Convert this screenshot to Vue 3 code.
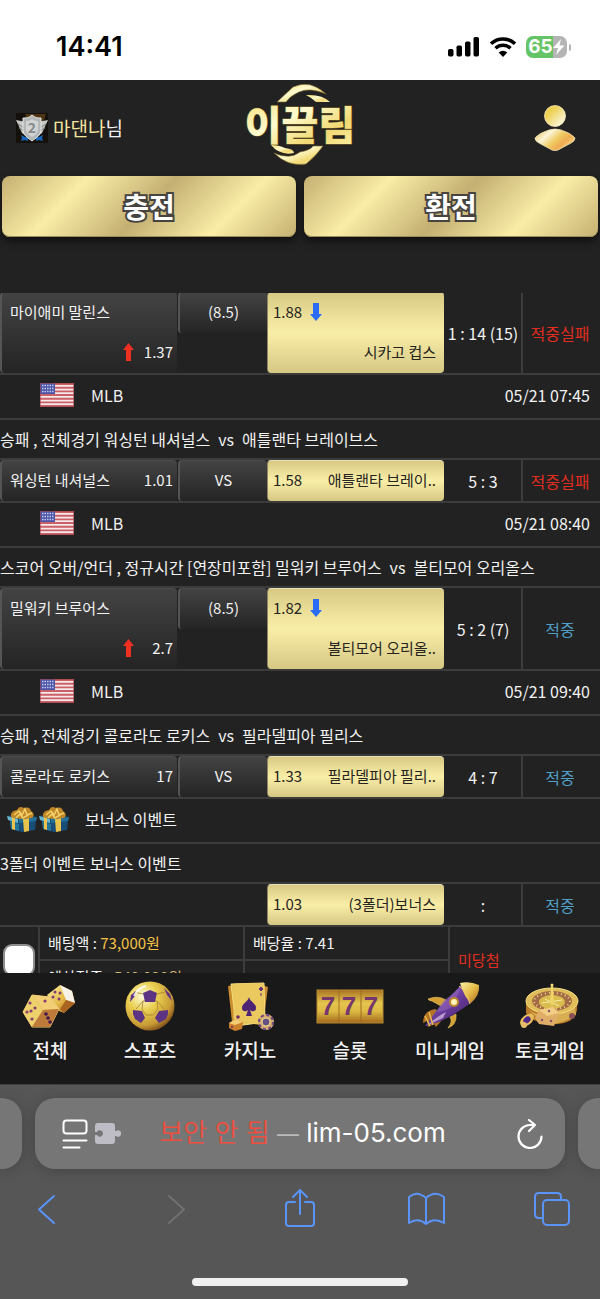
<script setup>
import { ref } from "vue";

const selected = ref(false);

const bets = [
  {
    home: "마이애미 말린스", homeOdds: "1.37", line: "(8.5)",
    away: "시카고 컵스", awayOdds: "1.88",
    tall: true, score: "1 : 14 (15)", result: "적중실패", won: false,
  },
  {
    league: "MLB", date: "05/21 07:45",
    market: "승패 , 전체경기 워싱턴 내셔널스", opponent: "애틀랜타 브레이브스",
    home: "워싱턴 내셔널스", homeOdds: "1.01", line: "VS",
    away: "애틀랜타 브레이..", awayOdds: "1.58",
    score: "5 : 3", result: "적중실패", won: false,
  },
  {
    league: "MLB", date: "05/21 08:40",
    market: "스코어 오버/언더 , 정규시간 [연장미포함] 밀워키 브루어스", opponent: "볼티모어 오리올스",
    home: "밀워키 브루어스", homeOdds: "2.7", line: "(8.5)",
    away: "볼티모어 오리올..", awayOdds: "1.82",
    tall: true, score: "5 : 2 (7)", result: "적중", won: true,
  },
  {
    league: "MLB", date: "05/21 09:40",
    market: "승패 , 전체경기 콜로라도 로키스", opponent: "필라델피아 필리스",
    home: "콜로라도 로키스", homeOdds: "17", line: "VS",
    away: "필라델피아 필리..", awayOdds: "1.33",
    score: "4 : 7", result: "적중", won: true,
  },
  {
    league: "보너스 이벤트", bonus: true,
    market: "3폴더 이벤트 보너스 이벤트",
    away: "(3폴더)보너스", awayOdds: "1.03",
    score: ":", result: "적중", won: true,
  },
];
</script>

<template>
  <div class="phone">
    <div class="status">
      <span class="time">14:41</span>
      <div class="indicators">
        <svg width="32" height="20" viewBox="0 0 32 20">
          <rect x="0" y="12" width="5.500" height="7.500" rx="1.700" />
          <rect x="8.500" y="8.500" width="5.500" height="11" rx="1.700" />
          <rect x="17" y="4.500" width="5.500" height="15" rx="1.700" />
          <rect x="25.500" y="0" width="5.500" height="19.500" rx="1.700" />
        </svg>
        <svg width="28" height="20" viewBox="0 0 28 20">
          <path d="M2 6.700a17.500 17.500 0 0 1 24 0" fill="none" stroke="#000" stroke-width="3.600" />
          <path d="M6.500 11.300a11 11 0 0 1 15 0" fill="none" stroke="#000" stroke-width="3.500" />
          <path d="M14 20l-4.300-4.500a6.500 6.500 0 0 1 8.600 0z" />
        </svg>
        <div class="battery">
          <span>65</span>
          <svg width="12" height="16" viewBox="0 0 12 16"><path d="M8 0L0 9h5l-2 7 8.500-9.500h-5z" fill="#fff" /></svg>
        </div>
      </div>
    </div>

    <header class="top">
      <div class="user">
        <svg width="32" height="30" viewBox="0 0 32 30">
          <rect width="32" height="30" fill="#14110d" />
          <path d="M9 1h21l-3 9-16-3z" fill="#4c3414" />
          <path d="M5 22l4 2 3-1v5l-3-1-4 1 1-3zM27 22l-4 2-3-1v5l3-1 4 1-1-3z" fill="#1765b8" />
          <path d="M0 7l10 2v14l-4-3zM32 7l-10 2v14l4-3z" fill="#c7c9c7" />
          <path d="M2 11l6 4M3 15l6 3M30 11l-6 4M29 15l-6 3" stroke="#777b79" fill="none" />
          <path d="M16 2c3 3 6 3 9 3v12c0 5-5 8-9 11-4-3-9-6-9-11V5c3 0 6 0 9-3z" fill="#b4b7b7" stroke="#e4e6e4" />
          <path d="M16 6c2 2 4 2 6 2v8c0 4-3 6-6 8-3-2-6-4-6-8V8c2 0 4 0 6-2z" fill="#d2d4d4" />
          <text x="16" y="20" text-anchor="middle" font-size="14" font-weight="700" fill="#85898a">2</text>
        </svg>
        <p><span class="name">마댄나</span>님</p>
      </div>
      <a href="#" class="logo">
        <svg width="120" height="90" viewBox="0 0 120 90">
          <defs>
            <linearGradient id="shine" x1="0" y1="0" x2="1" y2="1">
              <stop offset="0" stop-color="#f3d96c" />
              <stop offset=".4" stop-color="#fffbd0" />
              <stop offset=".7" stop-color="#f0d873" />
              <stop offset="1" stop-color="#fff4ae" />
            </linearGradient>
            <linearGradient id="gold" x1="0" y1="0" x2="1" y2="1">
              <stop offset="0" stop-color="#fff0a6" />
              <stop offset=".5" stop-color="#e6bd4a" />
              <stop offset="1" stop-color="#ae6a1d" />
            </linearGradient>
            <radialGradient id="ball" cx=".35" cy=".3" r=".75">
              <stop offset="0" stop-color="#fffce0" />
              <stop offset=".4" stop-color="#e9cf50" />
              <stop offset=".8" stop-color="#c79a35" />
              <stop offset="1" stop-color="#7d4c18" />
            </radialGradient>
            <linearGradient id="purple" x1="0" y1="0" x2="1" y2="1">
              <stop offset="0" stop-color="#a273ce" />
              <stop offset=".5" stop-color="#673b99" />
              <stop offset="1" stop-color="#351654" />
            </linearGradient>
            <linearGradient id="slot" x1="0" y1="0" x2="0" y2="1">
              <stop offset="0" stop-color="#a97422" />
              <stop offset=".4" stop-color="#e5c64f" />
              <stop offset=".65" stop-color="#dcb943" />
              <stop offset="1" stop-color="#a2671d" />
            </linearGradient>
          </defs>
          <path d="M37 22L53 7Q70-1 86 14Q70 7 59 12Q50 16 46 22z" fill="url(#shine)" stroke="#79612b" stroke-width=".6" />
          <path d="M66 15Q82 14 90 22H76Q72 18 66 15z" fill="url(#shine)" />
          <path d="M31 65Q39 65 45 68Q54 69 54 73Q40 76 31 65z" fill="url(#shine)" />
          <path d="M34 73Q50 80 60 72Q71 70 73 66H83Q76 76 66 84Q48 87 34 73z" fill="url(#shine)" stroke="#79612b" stroke-width=".6" />
          <text x="60" y="60" text-anchor="middle" class="wordmark">이끌림</text>
        </svg>
      </a>
      <button class="account" aria-label="내 정보">
        <svg width="42" height="46" viewBox="0 0 42 46">
          <defs>
            <linearGradient id="head" x1="0" y1="0" x2="1" y2="1">
              <stop offset=".3" stop-color="#edd152" />
              <stop offset="1" stop-color="#fff" />
            </linearGradient>
            <linearGradient id="bust" x1="0" y1="0" x2="1" y2=".6">
              <stop offset="0" stop-color="#e9b542" />
              <stop offset=".35" stop-color="#fdf5d9" />
              <stop offset=".6" stop-color="#efcb62" />
              <stop offset=".8" stop-color="#efab51" />
              <stop offset="1" stop-color="#f7d584" />
            </linearGradient>
          </defs>
          <circle cx="21" cy="11" r="10.500" fill="url(#head)" stroke="#f7e9bd" stroke-width=".8" />
          <path d="M1 33Q5 28 15 25Q21 23 27 25Q37 28 41 33Q41 36 37 38L24 45Q21 46 18 45L5 38Q1 36 1 33z" fill="url(#bust)" stroke="#f6e5b6" stroke-width=".8" />
        </svg>
      </button>
    </header>

    <div class="cash">
      <button>충전</button>
      <button>환전</button>
    </div>

    <main>
      <table class="bets">
        <colgroup>
          <col class="c-home" /><col class="c-line" /><col class="c-away" /><col class="c-score" /><col />
        </colgroup>
        <tbody v-for="(bet, i) in bets" :key="i">
          <tr v-if="bet.league">
            <td colspan="5">
              <div class="league" :class="{ bonus: bet.bonus }">
                <div v-if="bet.bonus" class="gifts">
                  <svg v-for="n in 2" :key="n" width="32" height="26" viewBox="0 0 32 26">
                    <path d="M1 10l15-2 15 3-1 4-1 9-13 2-11-3-1-9z" fill="#174d78" />
                    <path d="M1 10l11 3v4L2 14z" fill="#6cb5ce" />
                    <path d="M13 13l18-2-1 4-17 2z" fill="#247199" />
                    <path d="M4 15l9 3v7l-8-2z" fill="#28759b" />
                    <path d="M17 13l6-1v13l-5 1zM6 11l3 1v12l-3-1z" fill="#e8c24b" />
                    <path d="M5 11Q4 5 11 4Q13-1 18 2Q24 0 25 5Q30 8 26 12L14 13z" fill="#bf8728" />
                    <path d="M8 9l5-4 3 4 3-6 2 6 5-2M10 12l4-4 3 4 5-3" fill="none" stroke="#f2d16b" stroke-width="1.500" />
                  </svg>
                </div>
                <svg v-else width="34" height="24" viewBox="0 0 34 24">
                  <rect width="34" height="24" rx="1" fill="#f4e9e8" />
                  <path d="M0 1h34M0 4.700h34M0 8.400h34M0 12h34M0 15.700h34M0 19.400h34M0 23h34" stroke="#cc6068" stroke-width="1.900" />
                  <rect width="15" height="11" fill="#4a55a8" />
                  <path d="M2 2.500h12M2 5.500h12M2 8.500h12" stroke="#c5c8e8" stroke-width="1.600" stroke-dasharray="1.500 1" />
                  <rect x=".5" y=".5" width="33" height="23" fill="none" stroke="#a3434b" stroke-opacity=".6" />
                </svg>
                <span>{{ bet.league }}</span>
                <time v-if="bet.date">{{ bet.date }}</time>
              </div>
            </td>
          </tr>
          <tr v-if="bet.market">
            <td colspan="5">
              <p class="market">{{ bet.market }}<span v-if="bet.opponent" class="vs">vs</span>{{ bet.opponent }}</p>
            </td>
          </tr>
          <tr :class="{ tall: bet.tall }">
            <td>
              <div v-if="bet.home" class="pick home">
                <span>{{ bet.home }}</span>
                <span class="odds">
                  <svg v-if="bet.tall" width="11" height="18" viewBox="0 0 11 18"><path d="M5.500 0L11 7H8v11H3V7H0z" fill="#ee3023" /></svg>
                  <b>{{ bet.homeOdds }}</b>
                </span>
              </div>
            </td>
            <td class="line-cell">
              <div v-if="bet.line" class="line">{{ bet.line }}</div>
            </td>
            <td>
              <div class="pick away">
                <span class="odds">
                  {{ bet.awayOdds }}
                  <svg v-if="bet.tall" width="12" height="18" viewBox="0 0 12 18"><path d="M6 18L0 11h3V0h6v11h3z" fill="#2a6cf5" /></svg>
                </span>
                <span>{{ bet.away }}</span>
              </div>
            </td>
            <td class="score">{{ bet.score }}</td>
            <td class="result" :class="{ won: bet.won }">{{ bet.result }}</td>
          </tr>
        </tbody>
      </table>

      <table class="total">
        <colgroup>
          <col class="t-check" /><col class="t-sum" /><col class="t-sum" /><col />
        </colgroup>
        <tbody>
          <tr>
            <td rowspan="2" class="check"><input v-model="selected" type="checkbox" aria-label="선택" /></td>
            <td>배팅액 : <span class="stake">73,000원</span></td>
            <td>배당율 : 7.41</td>
            <td rowspan="2" class="lost">미당첨</td>
          </tr>
          <tr>
            <td>예상적중 : <span class="payout">540,930원</span></td>
            <td></td>
          </tr>
        </tbody>
      </table>
    </main>

    <nav class="games">
      <a href="#">
        <svg width="70" height="50" viewBox="0 0 70 50">
          <path d="M45 4L32 14l12 16 5 2 11-10-3-12z" fill="url(#gold)" />
          <path d="M45 4l12 6 3 12-9-3z" fill="#f7f2e8" />
          <path d="M51 19l9 3-11 10-4-4z" fill="#a9651f" />
          <g fill="#7f3e78"><circle cx="40" cy="11" r="1.500" /><circle cx="45" cy="12" r="1.500" /><circle cx="38" cy="16" r="1.500" /><circle cx="44" cy="18" r="1.500" /></g>
          <path d="M17 14l18 2 9 12-9 18H17L8 31z" fill="#d99c4d" stroke="#f0cb78" stroke-linejoin="round" />
          <path d="M17 14l18 2 9 12-16 1z" fill="#f2cf75" />
          <path d="M17 14l11 15-11 17-9-15z" fill="#ecd16c" />
          <path d="M28 29l16-1-9 18H17z" fill="#bd7a39" />
          <g fill="#8b3c72"><circle cx="15" cy="22" r="1.600" /><circle cx="20" cy="27" r="1.600" /><circle cx="12" cy="31" r="1.600" /><circle cx="16" cy="30" r="1.600" /><circle cx="17" cy="38" r="1.600" /><circle cx="30" cy="20" r="1.600" /></g>
          <g fill="#42194c"><circle cx="31" cy="33" r="1.800" /><circle cx="33" cy="37" r="1.800" /><circle cx="35" cy="41" r="1.800" /></g>
        </svg>
        전체
      </a>
      <a href="#">
        <svg width="70" height="50" viewBox="0 0 70 50">
          <circle cx="35" cy="25" r="24.500" fill="url(#ball)" />
          <path d="M28 20l-7 8M42 20l7 8M28 20l7-1 7 1 1 8-5 6h-7l-4-6zM28 13l-9-2M42 13l8-2" fill="none" stroke="#a98133" stroke-width=".8" />
          <g fill="#5d3384">
            <path d="M28 12l7-3 7 3-2 9H30z" /><path d="M18 29l9 1 3 7-4 5-6-4-2-5z" /><path d="M53 29l-9 1-4 7 4 5 7-4 2-5z" />
            <path d="M16 14l5-4-1 5-5 6zM49 7l6 6 2 7-5-6z" />
          </g>
          <path d="M19 15q4-8 12-10" fill="none" stroke="#fff" stroke-opacity=".8" stroke-width="2" />
        </svg>
        스포츠
      </a>
      <a href="#">
        <svg width="70" height="50" viewBox="0 0 70 50">
          <path d="M13 5l27-3 13 4-5 38-31-3z" fill="#c98c2e" />
          <path d="M16 3l33-1 1 39-29 4z" fill="#e8c75a" stroke="#f4dc80" />
          <path d="M20 2h28l-2 42-28-6z" fill="#ecca62" fill-opacity=".6" />
          <path d="M34 16c1 5 7 6 7 11 0 4-4 4-6 2l2 6h-6l2-6c-2 2-6 2-6-2 0-5 6-6 7-11z" fill="#4d2473" />
          <path d="M46 6l2 2-2 2-2-2zM46 12v3" fill="#61347c" stroke="#61347c" />
          <path d="M14 42l7-4 7 3-1 7-7 2-6-3z" fill="#cc802d" /><path d="M14 42l7-4 7 3-8 3z" fill="#f1cd78" />
          <circle cx="23" cy="36" r="1.800" fill="#6b2c68" /><circle cx="17" cy="46" r="1" fill="#6b2c68" />
          <circle cx="51" cy="41" r="8" fill="#d8ad70" /><circle cx="51" cy="41" r="7" fill="none" stroke="#684189" stroke-width="2" stroke-dasharray="3 2.500" />
          <circle cx="51" cy="41" r="4" fill="#655083" stroke="#efd987" />
        </svg>
        카지노
      </a>
      <a href="#">
        <svg width="70" height="50" viewBox="0 0 70 50">
          <rect x="2" y="9" width="66" height="33" fill="url(#slot)" stroke="#b8892e" />
          <path d="M24 9v33M46 9v33" stroke="#a16c22" />
          <g class="sevens"><text x="13" y="34">7</text><text x="34" y="34">7</text><text x="56" y="34">7</text></g>
        </svg>
        슬롯
      </a>
      <a href="#">
        <svg width="70" height="50" viewBox="0 0 70 50">
          <path d="M26 25l-9-5q-3 0-4-2 10-4 18 1zM35 36q3 5-2 11 9-3 8-14z" fill="#d4a034" stroke="#f0cd65" stroke-width=".6" />
          <path d="M20 28q-12 2-12 14l4-2 1 6 6-3 2 3q8-8 7-13z" fill="#b37425" />
          <path d="M48 2q9-1 16 4-1 9-8 16L38 34l-14 7-14 4 12-16z" fill="url(#purple)" />
          <path d="M48 2q-3 5-13 13-9 5-13 15 4 2 15-4z" fill="#9768bd" fill-opacity=".5" />
          <path d="M45 2q10-2 19 2 1 10-8 18-6-4-11-20z" fill="url(#gold)" />
          <path d="M44 5q8 6 11 18" fill="none" stroke="#efca68" />
          <circle cx="39" cy="21" r="5" fill="#be882d" /><circle cx="39" cy="21" r="3" fill="#fff3b9" />
          <path d="M14 43q10-9 17-12l-3 6-17 8z" fill="#b99ccb" />
          <path d="M10 35l5 10M14 31l4 13" stroke="#e8ba4f" stroke-width="1.500" />
        </svg>
        미니게임
      </a>
      <a href="#">
        <svg width="70" height="50" viewBox="0 0 70 50">
          <path d="M11 21v11q12 15 38 10 15-4 13-20z" fill="#b97b29" />
          <path d="M13 28q17 15 47-2l1 8q-16 11-32 9z" fill="#d9ad51" />
          <ellipse cx="37" cy="20" rx="26" ry="13" fill="#dfbd58" stroke="#f6df88" />
          <ellipse cx="37" cy="20" rx="20" ry="10" fill="#a26b45" />
          <ellipse cx="37" cy="20" rx="18" ry="8" fill="none" stroke="#edd08b" stroke-width="2" stroke-dasharray="1 3" />
          <ellipse cx="37" cy="21" rx="13" ry="7" fill="#d9bb4e" />
          <path d="M27 22l20-3M30 18l14 7" stroke="#f8eda4" />
          <path d="M36 4h2l1 17-2 4-2-4z" fill="#f0d566" /><circle cx="37" cy="4" r="1.500" fill="#f7df86" />
          <path d="M24 29l14-3 6 6-5 13-15-2-4-6z" fill="#dfad68" /><path d="M24 29l14-3 6 6-12 3z" fill="#f2ce85" />
          <circle cx="27" cy="39" r="1.200" fill="#805066" /><circle cx="34" cy="30" r="1.200" fill="#805066" /><circle cx="36" cy="40" r="1.200" fill="#805066" />
          <ellipse cx="12" cy="39" rx="8" ry="5" transform="rotate(-40 12 39)" fill="#e7bd5b" />
          <ellipse cx="12" cy="39" rx="4" ry="3" transform="rotate(-40 12 39)" fill="#4e268a" />
          <circle cx="9" cy="44" r="3" fill="#e8bc6c" /><circle cx="57" cy="35" r="3" fill="#8b4f54" />
        </svg>
        토큰게임
      </a>
    </nav>

    <footer class="browser">
      <div class="tabs">
        <div class="side left"></div>
        <div class="address">
          <div class="tools">
            <button aria-label="페이지 메뉴">
              <svg width="26" height="30" viewBox="0 0 26 30" fill="none" stroke="#fff" stroke-width="2" stroke-linecap="round">
                <rect x="1.500" y="1.500" width="23" height="13" rx="3" /><path d="M1.500 21.500h23M1.500 28.500h16" />
              </svg>
            </button>
            <button aria-label="확장 프로그램">
              <svg width="26" height="22" viewBox="0 0 26 22"><path d="M3 0h14q3 0 3 3v5h1a3.200 3.200 0 1 1 0 5h-1v5q0 3-3 3H3q-3 0-3-3v-6h2a3.200 3.200 0 1 0 0-3H0V3q0-3 3-3z" fill="#bebdc5" /></svg>
            </button>
          </div>
          <button class="url"><span class="insecure">보안 안 됨</span> <span class="dash">—</span> lim-05.com</button>
          <button class="reload" aria-label="새로고침">
            <svg width="26" height="30" viewBox="0 0 26 30" fill="none" stroke="#fff" stroke-width="2.200" stroke-linecap="round" stroke-linejoin="round">
              <path d="M24.500 17.500A11.500 11.500 0 1 1 13 6h5M12 1l6 5-6 6" />
            </svg>
          </button>
        </div>
        <div class="side right"></div>
      </div>
      <div class="toolbar">
        <button aria-label="뒤로"><svg width="38" height="40" viewBox="0 0 38 40"><path d="M26 7L11 20.500 26 34" /></svg></button>
        <button aria-label="앞으로" disabled><svg width="38" height="40" viewBox="0 0 38 40"><path d="M14 7l15 13.500L14 34" /></svg></button>
        <button aria-label="공유"><svg width="38" height="40" viewBox="0 0 38 40"><path d="M14 13H8q-3 0-3 3v18q0 3 3 3h22q3 0 3-3V16q0-3-3-3h-6M19 25V2M12 8l7-7 7 7" /></svg></button>
        <button aria-label="책갈피"><svg width="38" height="40" viewBox="0 0 38 40"><path d="M18 9v26M18 9Q9 1 1 8v26q9-6 17 1 8-7 18-1V8Q27 1 18 9z" /></svg></button>
        <button aria-label="탭"><svg width="38" height="40" viewBox="0 0 38 40"><rect x="9" y="11" width="26" height="25" rx="4" /><path d="M9 29H5q-4 0-4-4V8q0-4 4-4h18q4 0 4 4v3" /></svg></button>
      </div>
      <div class="grip"></div>
    </footer>
  </div>
</template>

<style>
body {
  margin: 0;
  background: #222;
}
</style>

<style scoped>
.phone {
  --line: #3c3c3c;

  display: flex;
  flex-direction: column;
  height: 100vh;
  overflow: hidden;

  background: #222;
  color: #f2f2f2;
  font: 16px/24px "Noto Sans CJK KR", sans-serif;
}

p {
  margin: 0;
}

svg {
  display: block;
  flex: none;
}

button {
  padding: 0;
  border: 0;
  background: none;
  color: inherit;
  font: inherit;
}

a {
  color: inherit;
  text-decoration: none;
}

.status {
  display: flex;
  flex: none;
  align-items: center;
  justify-content: space-between;
  box-sizing: border-box;
  height: 80px;
  padding: 14px 30px 0 56px;

  background: #fff;
  color: #000;
}

.time {
  font: 600 27px/32px Inter, sans-serif;
}

.indicators {
  display: flex;
  align-items: center;
  gap: 9px;
}

.battery {
  position: relative;
  display: flex;
  align-items: center;
  justify-content: center;
  width: 41px;
  height: 22px;
  margin-right: 3px;

  border-radius: 7px;
  background: linear-gradient(90deg, #65c466 65%, #b4b4b4 65%);
  color: #fff;
  font: 700 19px/22px Inter, sans-serif;
}

.battery::after {
  position: absolute;
  right: -4px;
  width: 2px;
  height: 7px;

  border-radius: 0 3px 3px 0;
  background: #b4b4b4;
  content: "";
}

.top {
  display: grid;
  flex: none;
  grid-template-columns: 1fr auto 1fr;
  align-items: center;
  height: 96px;
  padding: 0 24px 0 16px;
}

.user {
  display: flex;
  align-items: center;
  gap: 5px;

  font-size: 19px;
}

.name {
  color: #f3e3a0;
}

.logo {
  align-self: start;
  margin-left: 8px;
}

.wordmark {
  fill: url(#shine);
  stroke: #7d6425;
  stroke-width: 1px;
  paint-order: stroke;
  font-size: 40px;
  font-weight: 900;
}

.account {
  justify-self: end;
}

.cash {
  display: flex;
  flex: none;
  gap: 8px;
  padding: 0 2px 56px;
}

.cash button {
  flex: 1;
  height: 61px;
  padding-bottom: 2px;

  border-radius: 8px;
  background: linear-gradient(135deg, #c5b071, #f9eda7 25%, #c4b072 50%, #f9eda7 75%, #c5b071);
  box-shadow: 0 4px 8px #0009, inset 0 -1px #9d8d59;
  color: #fff;
  font-size: 28px;
  font-weight: 700;
  -webkit-text-stroke: 4px #47443f;
  paint-order: stroke fill;
}

main {
  flex: 1;
  min-height: 0;
  overflow: hidden;
}

table {
  width: 100%;

  border-spacing: 0;
  table-layout: fixed;
}

.bets {
  margin-top: -1px;
}

td {
  padding: 0;

  border-bottom: 2px solid var(--line);
}

.c-home,
.c-away {
  width: 29.67%;
}

.c-line {
  width: 14.83%;
}

.c-score {
  width: 12.67%;
}

.league {
  display: flex;
  align-items: center;
  gap: 17px;
  box-sizing: border-box;
  height: 43px;
  padding: 0 10px 4px 40px;
}

.league.bonus {
  gap: 15px;
  padding-left: 6px;
}

.league time {
  margin-left: auto;
}

.gifts {
  display: flex;
}

.market {
  line-height: 38px;
  white-space: nowrap;
}

.vs {
  margin: 0 8px;
}

.pick,
.line {
  display: flex;
  box-sizing: border-box;
  height: 41px;

  border-radius: 4px;
  font-size: 15px;
  line-height: 38px;
  white-space: nowrap;
}

.pick {
  align-items: flex-start;
  justify-content: space-between;
}

.tall .pick {
  flex-direction: column;
  height: 81px;
  padding-bottom: 2px;
}

.home,
.line,
.away {
  border-top: 1px solid #4b4b4b;
}

.home,
.line {
  border-left: 2px solid #555;
  background: linear-gradient(#434343, #242424);
}

.home {
  margin-right: 1px;
  padding: 0 4px 0 8px;
}

.home b {
  font-weight: 400;
}

.tall .home b {
  min-width: 39px;
  text-align: right;
}

.odds {
  display: flex;
  align-items: center;
}

.tall .home .odds {
  align-self: flex-end;
}

.line-cell {
  vertical-align: top;
}

.line {
  justify-content: center;
}

.away {
  margin-right: 1px;
  padding: 0 8px 0 5px;

  border-top-color: #e8dfb4;
  border-left: 1px solid #8d8568;
  background: linear-gradient(#d8ca85, #f9eea8 50%, #d5c784);
  color: #262420;
}

.away .odds {
  gap: 8px;
}

.tall .away span:last-child {
  align-self: flex-end;
}

.score,
.result {
  text-align: center;
  white-space: nowrap;
}

.result {
  padding-right: 3px;

  border-left: 2px solid var(--line);
  color: #e22d1f;
}

.won {
  color: #4f9fc6;
}

.total {
  font-size: 15px;
}

.t-check {
  width: 40px;
}

.t-sum {
  width: 34.17%;
}

.total td {
  height: 32px;
  padding-left: 8px;

  border-right: 2px solid var(--line);
}

.total .check {
  padding: 0;

  text-align: center;
}

.total .lost {
  border-right: 0;
  color: #e22d1f;
}

.check input {
  width: 32px;
  height: 32px;
  margin: 0;

  appearance: none;
  border: 2px solid #8d8d8d;
  border-radius: 9px;
  background: #fff;
  vertical-align: middle;
}

.check input:checked {
  background: #f9eda7;
}

.stake {
  color: #f5c244;
}

.payout {
  color: #d5b475;
}

.games {
  display: flex;
  flex: none;
  padding: 8px 0 20px;

  background: #191919;
}

.games a {
  display: flex;
  flex: 1;
  flex-direction: column;
  align-items: center;
  gap: 5px;

  font-size: 19px;
  font-weight: 500;
  line-height: 28px;
  white-space: nowrap;
}

.sevens {
  fill: #76386c;
  font: 700 26px "Liberation Sans", sans-serif;
  text-anchor: middle;
}

.browser {
  flex: none;
  padding: 13px 0;

  border-top: 1px solid #404040;
  background: #565656;
}

.tabs {
  display: flex;
  gap: 13px;
}

.side,
.address {
  background: #767676;
  box-shadow: 0 2px 14px #0003;
}

.side {
  width: 22px;
}

.left {
  border-radius: 0 20px 20px 0;
}

.right {
  border-radius: 20px 0 0 20px;
}

.address {
  display: grid;
  flex: 1;
  grid-template-columns: 1fr auto 1fr;
  align-items: center;
  box-sizing: border-box;
  height: 71px;
  padding: 0 22px 0 27px;

  border-radius: 20px;
}

.tools {
  display: flex;
  align-items: center;
  gap: 7px;
}

.url {
  color: #fff;
  font: 26px/36px Inter, "Noto Sans CJK KR", sans-serif;
  white-space: nowrap;
}

.insecure {
  color: #f04e3e;
  font-weight: 350;
}

.dash {
  color: #bbb;
  font-size: 22px;
}

.reload {
  justify-self: end;
}

.toolbar {
  display: flex;
  justify-content: space-between;
  padding: 20px 28px 49px;
}

.toolbar svg {
  fill: none;
  stroke: #5b94f8;
  stroke-width: 2px;
  stroke-linecap: round;
  stroke-linejoin: round;
}

.toolbar button:disabled svg {
  stroke: #717171;
}

.grip {
  width: 36%;
  height: 8px;
  margin: 0 auto;

  border-radius: 4px;
  background: #f0f0f0;
}
</style>
